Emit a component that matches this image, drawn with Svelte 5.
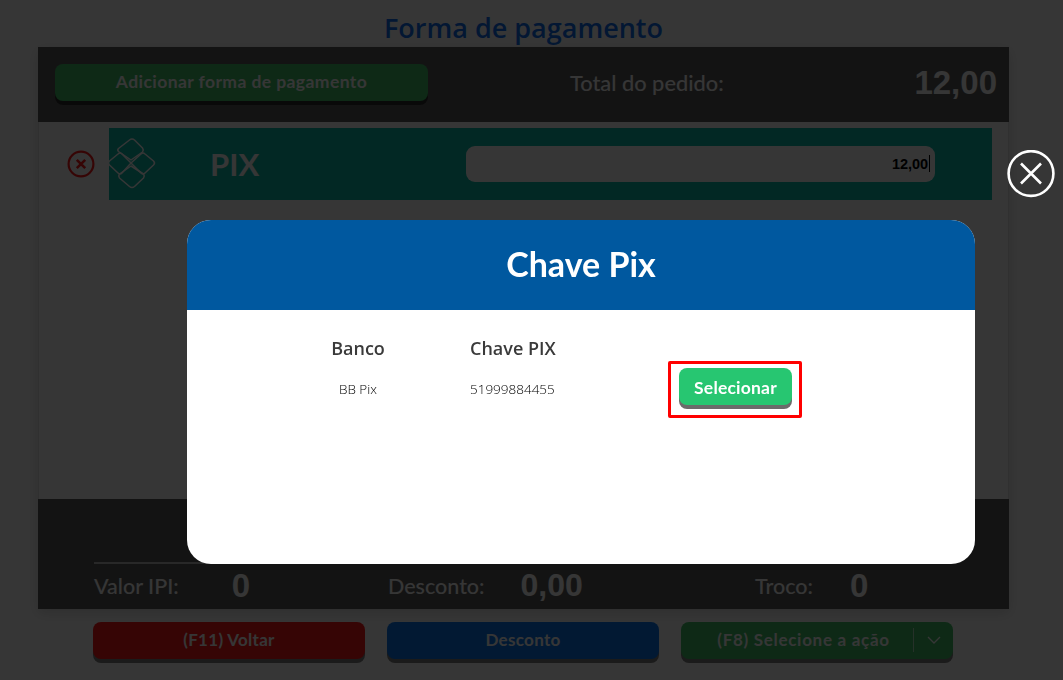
<script>
	const pay = { name: 'PIX', value: '12,00' };
	const totals = [
		{ label: 'Valor IPI:', value: '0', cls: 'ipi' },
		{ label: 'Desconto:', value: '0,00', cls: 'desc' },
		{ label: 'Troco:', value: '0', cls: 'troco' }
	];
</script>

<div class="page">
	<h1>Forma de pagamento</h1>

	<section class="panel">
		<header class="top">
			<button class="btn green add">Adicionar forma de pagamento</button>
			<span class="total-label">Total do pedido:</span>
			<strong class="total">12,00</strong>
		</header>

		<div class="list">
			<svg class="remove" width="28" height="28" viewBox="0 0 28 28" fill="none" stroke="#ff1a1a">
				<circle cx="14" cy="14" r="12.4" stroke-width="2.2" />
				<path d="M9.8 9.8l8.4 8.4M18.2 9.8l-8.4 8.4" stroke-width="2.6" />
			</svg>
			<div class="method">
				<svg class="pix" width="50" height="53" viewBox="0 0 50 53" fill="none" stroke="#fff" stroke-width="1.5" stroke-linejoin="round">
					<path d="M24 23L11.5 14.5Q10 13 11.5 11.5L22.5 3Q25 1 27.5 3L35.5 11Q37 13 35.5 15Z" />
					<path d="M24 26L15 17Q13 15 11 17L2.5 24Q0.5 26 2.5 28L11 36Q13 38 15 36Z" />
					<path d="M24 26L34 17Q36 15 38 17L46.5 24Q48.5 26 46.5 28L38 36Q36 38 34 36Z" />
					<path d="M24 29L12.5 37Q11 39 12.5 41L22.5 49.5Q25 51.5 27.5 49.5L36.5 41Q38 39 36.5 37Z" />
				</svg>
				<span class="name">{pay.name}</span>
				<div class="amount">{pay.value}<i class="caret"></i></div>
			</div>
		</div>

		<footer class="bottom">
			<div class="rule"></div>
			<div class="sums">
				{#each totals as t}
					<div class="sum {t.cls}">
						<span>{t.label}</span>
						<b>{t.value}</b>
					</div>
				{/each}
			</div>
		</footer>
	</section>

	<nav class="actions">
		<button class="btn red">(F11) Voltar</button>
		<button class="btn blue">Desconto</button>
		<button class="btn green split">
			<span class="split-text">(F8) Selecione a ação</span>
			<span class="split-arrow">
				<svg width="14" height="8" viewBox="0 0 14 8" fill="none" stroke="#fff" stroke-width="1.3"><path d="M1 1l6 6 6-6" /></svg>
			</span>
		</button>
	</nav>
</div>

<div class="overlay">
	<div class="modal">
		<div class="modal-head">Chave Pix</div>
		<div class="modal-body">
			<div class="th">Banco</div>
			<div class="th left">Chave PIX</div>
			<div></div>
			<div class="td">BB Pix</div>
			<div class="td left">51999884455</div>
			<div class="mark">
				<button class="select">Selecionar</button>
			</div>
		</div>
	</div>
</div>

<svg class="close" width="48" height="48" viewBox="0 0 48 48" fill="none" stroke="#fff">
	<circle cx="24" cy="23.5" r="22.4" stroke-width="2.6" />
	<path d="M14 13.5l20 20M34 13.5l-20 20" stroke-width="2.6" />
</svg>

<style>
	:global(body) {
		margin: 0;
		background: #fff;
		overflow: hidden;
	}

	.page {
		height: 680px;
		font-family: Lato, sans-serif;
		color: #fff;
		display: flex;
		flex-direction: column;
		padding-left: 38px;
		box-sizing: border-box;
	}

	h1 {
		margin: 0;
		width: 971px;
		height: 47px;
		box-sizing: border-box;
		padding-top: 10px;
		text-align: center;
		font: 600 27px/36px "Open Sans", sans-serif;
		color: #0f6ff0;
	}

	.panel {
		width: 971px;
		height: 562px;
		display: flex;
		flex-direction: column;
		box-shadow: 0 4px 12px rgba(0, 0, 0, 0.15);
	}

	.top {
		height: 75px;
		background: #5c5c5c;
		display: flex;
		align-items: center;
		padding: 0 12px 0 17px;
	}

	.btn {
		height: 37px;
		border: none;
		border-radius: 8px;
		font: 700 17px Lato, sans-serif;
		letter-spacing: 0.3px;
		color: #fff;
		padding: 0 0 2px;
		box-shadow: 0 4px 0 rgba(0, 0, 0, 0.5);
	}

	.green { background: #42c268; }
	.red { background: #ff1919; }
	.blue { background: #0a78f0; }

	.add {
		width: 373px;
		margin-top: -5px;
		font-size: 17.5px;
		letter-spacing: 0.42px;
	}

	.total-label {
		margin: -5px 0 0 142px;
		font-size: 21.8px;
		font-weight: 500;
	}

	.total {
		margin: -3px 0 0 auto;
		font: 700 33px "Liberation Sans", sans-serif;
	}

	.list {
		height: 377px;
		box-sizing: border-box;
		border: solid rgba(0, 0, 0, 0.12);
		border-width: 0 1px;
		padding: 6px 16px 0 28px;
		display: flex;
		align-items: flex-start;
		background: #fff;
	}

	.remove {
		margin: 22px 14px 0 0;
	}

	.method {
		flex: 1;
		height: 72px;
		background: #0cbbab;
		display: flex;
		align-items: center;
	}

	.pix {
		margin: -1px 0 0 -2px;
	}

	.name {
		margin-left: 53px;
		font-size: 31px;
		font-weight: 700;
	}

	.amount {
		margin-left: 207px;
		width: 469px;
		height: 36px;
		box-sizing: border-box;
		padding-right: 5px;
		background: #fff;
		border-radius: 9px;
		color: #000;
		font: 700 14.5px/36px "Liberation Sans", sans-serif;
		text-align: right;
	}

	.caret {
		display: inline-block;
		width: 1px;
		height: 17px;
		margin-left: 1px;
		vertical-align: -3px;
		background: #000;
	}

	.bottom {
		flex: 1;
		background: #5c5c5c;
		padding: 63px 0 0 56px;
		box-sizing: border-box;
	}

	.rule {
		height: 2px;
		width: 300px;
		background: #bbb;
	}

	.sums {
		display: flex;
		height: 43px;
		align-items: center;
	}

	.sum {
		display: flex;
		align-items: center;
		font-size: 21.5px;
		font-weight: 500;
	}

	.sum b {
		font: 700 32px "Liberation Sans", sans-serif;
	}

	.ipi { width: 294px; gap: 53px; }
	.desc { width: 367px; gap: 36px; }
	.troco { gap: 37px; }
	.ipi b, .troco b { font-size: 33px; }

	.actions {
		display: flex;
		gap: 22px;
		padding: 13px 0 0 55px;
	}

	.actions .btn {
		width: 272px;
	}

	.split {
		display: flex;
		align-items: center;
	}

	.split-text {
		width: 232px;
		box-sizing: border-box;
		padding-left: 13px;
		letter-spacing: 0.7px;
		text-align: center;
		white-space: nowrap;
	}

	.split-arrow {
		flex: 1;
		height: 24px;
		border-left: 1px solid rgba(255, 255, 255, 0.6);
		display: flex;
		align-items: center;
		justify-content: center;
	}

	.overlay {
		position: fixed;
		inset: 0;
		background: rgba(0, 0, 0, 0.79);
		padding: 220px 0 0 187px;
		box-sizing: border-box;
	}

	.modal {
		width: 788px;
		height: 344px;
		background: #fff;
		border-radius: 24px;
		overflow: hidden;
	}

	.modal-head {
		height: 90px;
		background: #00589f;
		color: #fff;
		font: 700 34px/88px Lato, sans-serif;
		text-align: center;
	}

	.modal-body {
		display: grid;
		grid-template-columns: 78px 271px 134px;
		grid-template-rows: 41px 57px;
		padding: 18px 0 0 132px;
		font-family: "Open Sans", sans-serif;
		color: #3a3a3a;
	}

	.th {
		font-size: 18px;
		font-weight: 600;
		line-height: 41px;
		text-align: center;
		white-space: nowrap;
	}

	.td {
		font-size: 13.5px;
		font-weight: 300;
		color: #000;
		line-height: 41px;
		text-align: center;
		white-space: nowrap;
	}

	.left {
		text-align: left;
		padding-left: 73px;
	}

	.mark {
		height: 57px;
		margin-top: -8px;
		border: 3px solid #f00;
		border-radius: 2px;
		box-sizing: border-box;
		padding: 4px 8px;
	}

	.select {
		display: block;
		width: 113px;
		height: 37px;
		padding: 2px 0 0;
		border: none;
		border-radius: 8px;
		background: #27c671;
		box-shadow: 0 4px 0 #6b6b6b;
		color: #fff;
		font: 700 17.5px Lato, sans-serif;
		letter-spacing: 0.2px;
	}

	.close {
		position: fixed;
		left: 1007px;
		top: 150px;
	}
</style>
